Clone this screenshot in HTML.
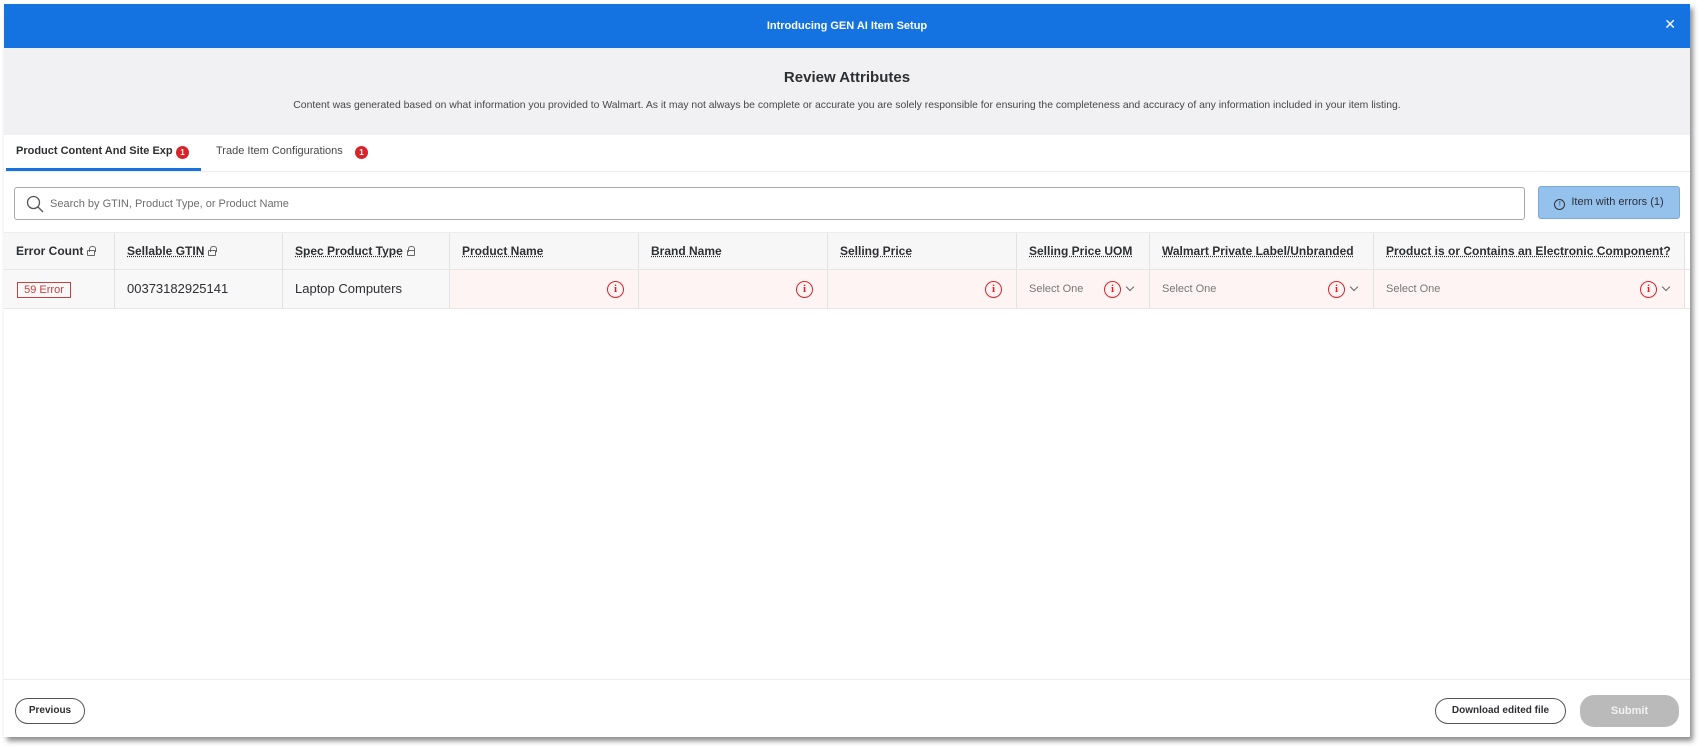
<!DOCTYPE html>
<html><head><meta charset="utf-8"><style>
*{box-sizing:border-box;margin:0;padding:0}
body{width:1704px;height:750px;background:#fff;font-family:"Liberation Sans",sans-serif;position:relative;overflow:hidden;color:#2e2f32}
.modal{position:absolute;left:4px;top:4px;width:1686px;height:733px;background:#fff;box-shadow:3px 4px 5px rgba(0,0,0,.45);overflow:hidden}
.a{position:absolute}
.hdr{left:0;top:0;width:1686px;height:44px;background:#1473e0;color:#fff;font-weight:bold;font-size:11px;text-align:center;line-height:44px}
.grey{left:0;top:44px;width:1686px;height:87px;background:#f1f1f3}
.th{position:absolute;top:229px;height:36px;line-height:36px;font-size:12px;font-weight:bold;padding-left:12px;border-right:1px solid #e3e3e3;background:#f7f7f7;white-space:nowrap}
.th u{text-decoration:underline dotted}
.lk{display:inline-block;width:8px;height:6px;border:1px solid #666;border-radius:1px;position:relative;margin-left:4px;vertical-align:-1px}
.lk:before{content:"";position:absolute;left:0.5px;top:-5px;width:5px;height:5px;border:1px solid #666;border-bottom:none;border-radius:3px 3px 0 0}
.td{position:absolute;top:266px;height:38px;line-height:38px;font-size:13px;padding-left:12px;border-right:1px solid #e3e3e3;background:#f8f8f8;white-space:nowrap}
.err{background:#fff4f4}
.info{position:absolute;top:11px;width:17px;height:17px;border:1.5px solid #d9232a;border-radius:50%;color:#d9232a;font-size:11px;line-height:14px;text-align:center;font-family:"Liberation Serif",serif;font-weight:bold}
.sel{color:#777;font-size:11px}
.chev{position:absolute;top:14px;width:6px;height:6px;border-right:1px solid #666;border-bottom:1px solid #666;transform:rotate(45deg)}
.btn{position:absolute;border-radius:14px;font-size:11px;font-weight:bold;text-align:center}
</style></head><body>
<div class="modal">
<div class="a hdr">Introducing GEN AI Item Setup</div>
<div class="a" style="right:14px;top:12px;color:#fff;font-size:14px">✕</div>
<div class="a grey">
 <div class="a" style="left:0;width:1686px;top:21px;text-align:center;font-size:15px;font-weight:bold;color:#2e2f32">Review Attributes</div>
 <div class="a" style="left:0;width:1686px;top:52px;text-align:center;font-size:10.4px;color:#46474a">Content was generated based on what information you provided to Walmart. As it may not always be complete or accurate you are solely responsible for ensuring the completeness and accuracy of any information included in your item listing.</div>
</div>
<div class="a" style="left:12px;top:141px;font-size:11px;font-weight:bold">Product Content And Site Exp</div>
<div class="a" style="left:172px;top:142px;width:13px;height:13px;border-radius:50%;background:#d9232a;color:#fff;font-size:8px;line-height:13px;text-align:center;font-weight:bold">1</div>
<div class="a" style="left:2px;top:164px;width:195px;height:3px;background:#1473e0"></div>
<div class="a" style="left:0;top:167px;width:1686px;height:1px;background:#ececec"></div>
<div class="a" style="left:212px;top:141px;font-size:11px;color:#46474a">Trade Item Configurations</div>
<div class="a" style="left:351px;top:142px;width:13px;height:13px;border-radius:50%;background:#d9232a;color:#fff;font-size:8px;line-height:13px;text-align:center;font-weight:bold">1</div>
<div class="a" style="left:10px;top:183px;width:1511px;height:33px;border:1px solid #a9a9ab;border-radius:3px"></div>
<svg class="a" style="left:22px;top:191px" width="18" height="18" viewBox="0 0 18 18"><circle cx="7.5" cy="7.5" r="6" fill="none" stroke="#555" stroke-width="1.3"/><line x1="12" y1="12" x2="17" y2="17" stroke="#555" stroke-width="1.3"/></svg>
<div class="a" style="left:46px;top:194px;font-size:11px;color:#6d6e71">Search by GTIN, Product Type, or Product Name</div>
<div class="a" style="left:1534px;top:182px;width:142px;height:33px;background:#95c1ed;border:1px solid #7aa9d8;border-radius:3px;font-size:11px;line-height:31px;text-align:center;color:#2e2f32"><span style="display:inline-block;width:11px;height:11px;border:1.2px solid #333;border-radius:50%;font-size:7px;line-height:9px;vertical-align:-1px;margin-right:6px">!</span>Item with errors (1)</div>
<div class="a" style="left:0;top:228px;width:1686px;height:1px;background:#ececec"></div>
<div class="th" style="left:0;width:111px">Error Count<span class="lk"></span></div>
<div class="th" style="left:111px;width:168px"><u>Sellable GTIN</u><span class="lk"></span></div>
<div class="th" style="left:279px;width:167px"><u>Spec Product Type</u><span class="lk"></span></div>
<div class="th" style="left:446px;width:189px"><u>Product Name</u></div>
<div class="th" style="left:635px;width:189px"><u>Brand Name</u></div>
<div class="th" style="left:824px;width:189px"><u>Selling Price</u></div>
<div class="th" style="left:1013px;width:133px"><u>Selling Price UOM</u></div>
<div class="th" style="left:1146px;width:224px"><u>Walmart Private Label/Unbranded</u></div>
<div class="th" style="left:1370px;width:311px"><u>Product is or Contains an Electronic Component?</u></div>
<div class="a" style="left:0;top:265px;width:1686px;height:1px;background:#e6e6e6"></div>
<div class="td" style="left:0;width:111px"><span style="position:absolute;left:13px;top:12px;width:54px;height:16px;border:1px solid #c84040;color:#c84040;font-size:11px;line-height:14px;text-align:center">59 Error</span></div>
<div class="td" style="left:111px;width:168px">00373182925141</div>
<div class="td" style="left:279px;width:167px">Laptop Computers</div>
<div class="td err" style="left:446px;width:189px"><div class="info" style="left:157px">i</div></div>
<div class="td err" style="left:635px;width:189px"><div class="info" style="left:157px">i</div></div>
<div class="td err" style="left:824px;width:189px"><div class="info" style="left:157px">i</div></div>
<div class="td err sel" style="left:1013px;width:133px">Select One<div class="info" style="left:87px">i</div><div class="chev" style="left:110px"></div></div>
<div class="td err sel" style="left:1146px;width:224px">Select One<div class="info" style="left:178px">i</div><div class="chev" style="left:201px"></div></div>
<div class="td err sel" style="left:1370px;width:311px">Select One<div class="info" style="left:266px">i</div><div class="chev" style="left:289px"></div></div>
<div class="a" style="left:0;top:304px;width:1686px;height:1px;background:#e6e6e6"></div>
<div class="a" style="left:0;top:675px;width:1686px;height:1px;background:#ececec"></div>
<div class="btn" style="left:11px;top:694px;width:70px;height:26px;border:1px solid #555;line-height:24px;font-size:10px">Previous</div>
<div class="btn" style="left:1431px;top:694px;width:131px;height:26px;border:1px solid #555;line-height:24px;font-size:10px">Download edited file</div>
<div class="btn" style="left:1576px;top:691px;width:99px;height:32px;background:#bababa;color:#f2f2f2;line-height:32px">Submit</div>
</div>
</body></html>
